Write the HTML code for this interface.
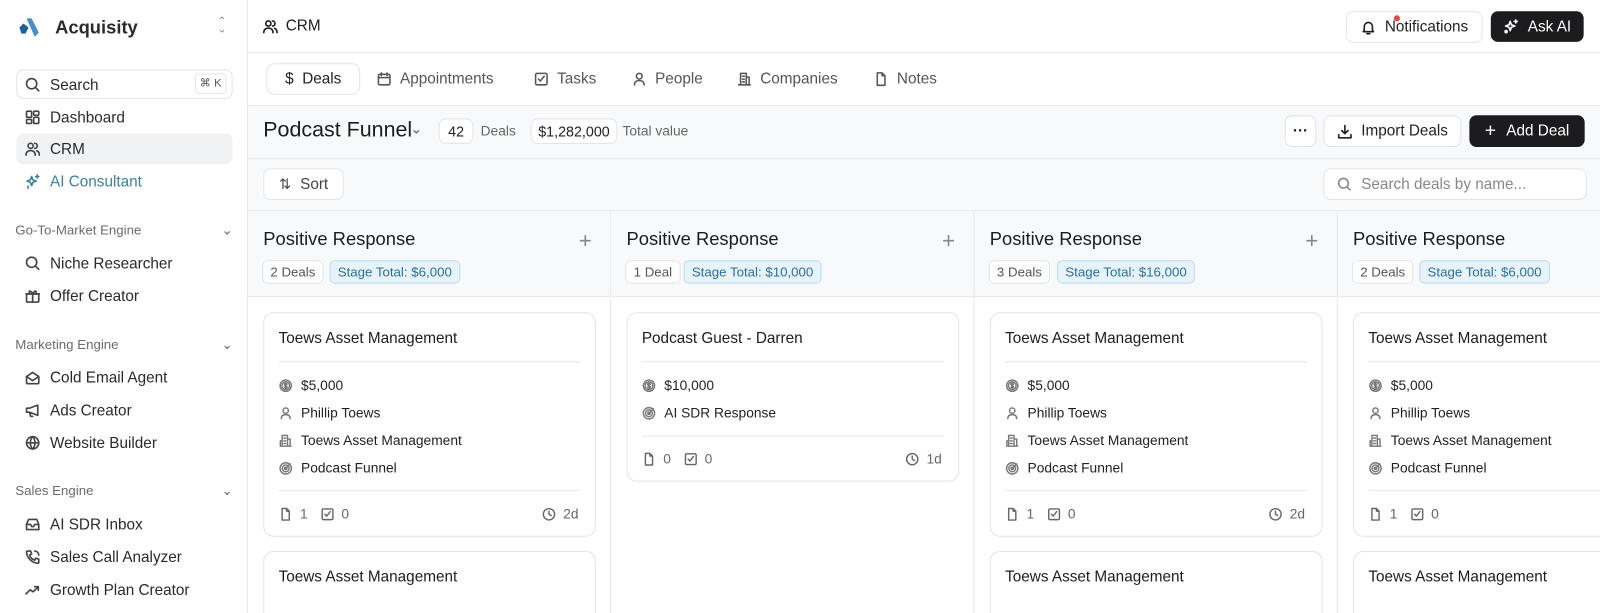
<!DOCTYPE html>
<html><head><meta charset="utf-8"><style>
*{box-sizing:border-box;margin:0;padding:0}
html,body{width:1600px;height:613px;overflow:hidden;background:#fff}
body{font-family:"Liberation Sans",sans-serif;color:#1c1c1e;position:relative}
#w{position:absolute;left:0;top:0;width:1568px;height:601px;transform:scale(1.0204);transform-origin:0 0;overflow:hidden}
.abs{position:absolute}
svg{fill:none;stroke:currentColor;stroke-width:1.6;stroke-linecap:round;stroke-linejoin:round}
.side{left:0;top:0;width:243px;height:601px;border-right:1px solid #e6e7ea;background:#fff}
.ni{position:absolute;left:16px;width:212px;height:30px;display:flex;align-items:center;font-size:15px;color:#2a2a2d;padding-left:8px}
.ni svg{width:16px;height:16px;margin-right:9px;color:#444}
.sec{position:absolute;left:15px;width:213px;font-size:13px;color:#6b6b70;display:flex;justify-content:space-between}
.btn{position:absolute;border:1px solid #e3e4e7;border-radius:7px;background:#fff;display:flex;align-items:center;justify-content:center;font-size:15px;color:#222}
.dark{background:#1c1c1e;color:#fff;border-color:#1c1c1e}
.tab{position:absolute;top:62px;height:30px;display:flex;align-items:center;font-size:15px;color:#555}
.tab svg{width:15px;height:15px;margin-right:8px}
.col{position:absolute;top:207px;width:356px;height:406px;border-right:1px solid #e6e7ea}
.ch{height:84px;background:#f8f9fa;border-bottom:1px solid #e6e7ea;position:relative}
.ct{position:absolute;left:15px;top:17px;font-size:18px;color:#1c1c1e}
.plus{position:absolute;right:18px;top:16px;font-size:22px;color:#888;font-weight:300}
.pill{position:absolute;top:48px;height:23px;border:1px solid #e3e4e7;border-radius:5px;background:#fff;font-size:13px;color:#555;display:flex;align-items:center;padding:0 7px}
.pill.b{background:#e6f3fb;border-color:#b9dcf0;color:#2f6f9c}
.card{position:absolute;left:15px;width:326px;border:1px solid #e3e4e7;border-radius:10px;background:#fff}
.card .t{position:absolute;left:14px;top:16px;font-size:15px;color:#1c1c1e}
.hr{position:absolute;left:14px;right:14px;height:1px;background:#e6e7ea}
.row{position:absolute;left:14px;font-size:13.5px;color:#222;display:flex;align-items:center}
.row svg{width:14px;height:14px;margin-right:8px;color:#777}
.foot{position:absolute;left:14px;right:16px;font-size:13.5px;color:#666;display:flex;align-items:center}
.foot svg{width:14px;height:14px;margin-right:7px;color:#666}
</style></head><body><div id="w">
<div class="abs side">
 <div class="abs" style="left:17px;top:17px"><svg width="22" height="20" viewBox="0 0 22 20" style="stroke:none"><path d="M9 1h5l7 14-4 4z" fill="#4a8ec9"/><path d="M2 10l4-4 5 4-3 6H4z" fill="#1f5f99"/></svg></div>
 <div class="abs" style="left:54px;top:17px;font-size:18px;font-weight:bold;color:#2a2a2d">Acquisity</div>
 <div class="abs" style="left:213px;top:17px;font-size:11px;color:#888;line-height:8px">⌃<br>⌄</div>
 <div class="abs" style="left:16px;top:68px;width:212px;height:29px;border:1px solid #e3e4e7;border-radius:7px"></div>
 <div class="ni" style="top:68px"><svg viewBox="0 0 16 16"><circle cx="7" cy="7" r="5"/><path d="M11 11l3 3"/></svg>Search</div>
 <div class="abs" style="left:191px;top:72px;width:31px;height:20px;border:1px solid #e3e4e7;border-radius:4px;font-size:11px;color:#555;text-align:center;line-height:18px">⌘ K</div>
 <div class="ni" style="top:100px"><svg viewBox="0 0 16 16"><rect x="2" y="2" width="5" height="6" rx="1"/><rect x="9" y="2" width="5" height="4" rx="1"/><rect x="2" y="10" width="5" height="4" rx="1"/><rect x="9" y="8" width="5" height="6" rx="1"/></svg>Dashboard</div>
 <div class="ni" style="top:131px;background:#f1f2f4;border-radius:7px"><svg viewBox="0 0 16 16"><circle cx="6" cy="5" r="2.5"/><path d="M1.5 14c0-3 2-4.5 4.5-4.5s4.5 1.5 4.5 4.5M10 2.5a2.5 2.5 0 010 5M12 9.8c1.6.5 2.5 1.9 2.5 4.2"/></svg>CRM</div>
 <div class="ni" style="top:163px;color:#3f7f9f"><svg viewBox="0 0 16 16" style="color:#3f7f9f"><path d="M7 3l1.2 3.3L11.5 7.5 8.2 8.7 7 12 5.8 8.7 2.5 7.5 5.8 6.3z"/><path d="M12.5 1.5v3M11 3h3M3.5 12.5v2"/></svg>AI Consultant</div>
 <div class="sec" style="top:218px"><span>Go-To-Market Engine</span><span>⌄</span></div>
 <div class="ni" style="top:243px"><svg viewBox="0 0 16 16"><circle cx="7" cy="7" r="5"/><path d="M11 11l3 3"/></svg>Niche Researcher</div>
 <div class="ni" style="top:275px"><svg viewBox="0 0 16 16"><rect x="2" y="6" width="12" height="8" rx="1"/><path d="M1.5 6h13M8 6v8M8 6C6 2 3.5 3 5 5M8 6c2-4 4.5-3 3-1"/></svg>Offer Creator</div>
 <div class="sec" style="top:330px"><span>Marketing Engine</span><span>⌄</span></div>
 <div class="ni" style="top:355px"><svg viewBox="0 0 16 16"><path d="M2 7l6-4 6 4v6a1 1 0 01-1 1H3a1 1 0 01-1-1z"/><path d="M2 7l6 4 6-4"/></svg>Cold Email Agent</div>
 <div class="ni" style="top:387px"><svg viewBox="0 0 16 16"><path d="M2 6h3l8-3v10L5 10H2zM5 10l1 4h2"/></svg>Ads Creator</div>
 <div class="ni" style="top:419px"><svg viewBox="0 0 16 16"><circle cx="8" cy="8" r="6"/><path d="M2 8h12M8 2c-3 3-3 9 0 12M8 2c3 3 3 9 0 12"/></svg>Website Builder</div>
 <div class="sec" style="top:473px"><span>Sales Engine</span><span>⌄</span></div>
 <div class="ni" style="top:499px"><svg viewBox="0 0 16 16"><path d="M2 8l2-5h8l2 5v5H2zM2 8h4l1 2h2l1-2h4"/></svg>AI SDR Inbox</div>
 <div class="ni" style="top:531px"><svg viewBox="0 0 16 16"><path d="M3 2h3l1 3-2 1a8 8 0 005 5l1-2 3 1v3a1 1 0 01-1 1A12 12 0 012 3a1 1 0 011-1zM10 2a4 4 0 014 4"/></svg>Sales Call Analyzer</div>
 <div class="ni" style="top:563px"><svg viewBox="0 0 16 16"><path d="M1.5 12l4-4 3 2 5-5M10 5h3.5v3.5"/></svg>Growth Plan Creator</div>
</div>

<div class="abs" style="left:243px;top:0;width:1357px;height:52px;border-bottom:1px solid #e6e7ea"></div>
<div class="abs" style="left:257px;top:17px;font-size:15px;display:flex;align-items:center"><svg viewBox="0 0 16 16" width="16" height="16" style="margin-right:7px"><circle cx="6" cy="5" r="2.5"/><path d="M1.5 14c0-3 2-4.5 4.5-4.5s4.5 1.5 4.5 4.5M10 2.5a2.5 2.5 0 010 5M12 9.8c1.6.5 2.5 1.9 2.5 4.2"/></svg>CRM</div>
<div class="btn" style="left:1319px;top:11px;width:134px;height:31px"><svg viewBox="0 0 16 16" width="16" height="16" style="margin-right:8px"><path d="M4 11V7a4 4 0 018 0v4l1 1H3zM6.5 14h3"/></svg>Notifications</div>
<div class="abs" style="left:1366px;top:15px;width:6px;height:6px;border-radius:50%;background:#e5484d"></div>
<div class="btn dark" style="left:1461px;top:11px;width:91px;height:30px"><svg viewBox="0 0 16 16" width="16" height="16" style="margin-right:8px"><path d="M7 3l1.2 3.3L11.5 7.5 8.2 8.7 7 12 5.8 8.7 2.5 7.5 5.8 6.3z"/><path d="M12.5 1.5v3M11 3h3"/><circle cx="3" cy="13" r="1"/></svg>Ask AI</div>

<div class="abs" style="left:243px;top:52px;width:1357px;height:52px;border-bottom:1px solid #e6e7ea"></div>
<div class="btn" style="left:261px;top:62px;width:92px;height:31px;border-radius:8px">$&nbsp;&nbsp;Deals</div>
<div class="tab" style="left:369px"><svg viewBox="0 0 16 16"><rect x="2" y="3" width="12" height="11" rx="1.5"/><path d="M2 6.5h12M5 1.5v3M11 1.5v3"/></svg>Appointments</div>
<div class="tab" style="left:523px"><svg viewBox="0 0 16 16"><rect x="2" y="2" width="12" height="12" rx="1.5"/><path d="M5 8l2 2 4-5"/></svg>Tasks</div>
<div class="tab" style="left:619px"><svg viewBox="0 0 16 16"><circle cx="8" cy="5" r="3"/><path d="M3 14c0-3 2-4.5 5-4.5s5 1.5 5 4.5"/></svg>People</div>
<div class="tab" style="left:722px"><svg viewBox="0 0 16 16"><path d="M4 14V2h6v12M10 6h3v8M2 14h12M6 5h2M6 8h2M6 11h2"/></svg>Companies</div>
<div class="tab" style="left:856px"><svg viewBox="0 0 16 16"><path d="M4 1.5h5l3 3v10H4zM9 1.5v3h3"/></svg>Notes</div>

<div class="abs" style="left:243px;top:104px;width:1357px;height:103px;background:#f8f9fa;border-bottom:1px solid #e6e7ea"></div>
<div class="abs" style="left:243px;top:155px;width:1357px;height:1px;background:#e6e7ea"></div>
<div class="abs" style="left:258px;top:116px;font-size:21px;color:#1c1c1e">Podcast Funnel</div>
<div class="abs" style="left:402px;top:118px;font-size:14px;color:#666">⌄</div>
<div class="btn" style="left:430px;top:116px;width:34px;height:25px;font-size:14px">42</div>
<div class="abs" style="left:471px;top:121px;font-size:13.5px;color:#666">Deals</div>
<div class="btn" style="left:520px;top:116px;width:85px;height:25px;font-size:14px">$1,282,000</div>
<div class="abs" style="left:610px;top:121px;font-size:13.5px;color:#666">Total value</div>
<div class="btn" style="left:1259px;top:113px;width:31px;height:31px;font-weight:bold">···</div>
<div class="btn" style="left:1297px;top:113px;width:135px;height:31px"><svg viewBox="0 0 16 16" width="16" height="16" style="margin-right:8px"><path d="M8 2v8M5 7l3 3 3-3M2 11v3h12v-3"/></svg>Import Deals</div>
<div class="btn dark" style="left:1440px;top:113px;width:113px;height:31px"><span style="font-size:19px;margin-right:10px;font-weight:300">+</span>Add Deal</div>
<div class="btn" style="left:258px;top:165px;width:79px;height:31px;color:#444"><span style="margin-right:9px;font-size:14px">⇅</span>Sort</div>
<div class="btn" style="left:1297px;top:165px;width:258px;height:31px;justify-content:flex-start;padding-left:12px;color:#888"><svg viewBox="0 0 16 16" width="15" height="15" style="margin-right:9px"><circle cx="7" cy="7" r="5"/><path d="M11 11l3 3"/></svg>Search deals by name...</div>

<div class="col" style="left:243px">
 <div class="ch"><div class="ct">Positive Response</div><div class="plus">+</div>
 <div class="pill" style="left:14px">2 Deals</div><div class="pill b" style="left:80px">Stage Total: $6,000</div></div>
</div>
<div class="col" style="left:599px">
 <div class="ch"><div class="ct">Positive Response</div><div class="plus">+</div>
 <div class="pill" style="left:14px">1 Deal</div><div class="pill b" style="left:71px">Stage Total: $10,000</div></div>
</div>
<div class="col" style="left:955px">
 <div class="ch"><div class="ct">Positive Response</div><div class="plus">+</div>
 <div class="pill" style="left:14px">3 Deals</div><div class="pill b" style="left:81px">Stage Total: $16,000</div></div>
</div>
<div class="col" style="left:1311px;border-right:none;width:289px">
 <div class="ch"><div class="ct">Positive Response</div>
 <div class="pill" style="left:14px">2 Deals</div><div class="pill b" style="left:80px">Stage Total: $6,000</div></div>
</div>

<svg width="0" height="0" style="position:absolute"><defs>
<symbol id="dol" viewBox="0 0 16 16"><circle cx="8" cy="8" r="6.3"/><circle cx="8" cy="8" r="4.3"/><path d="M9.5 6.3c-.4-.5-1-.7-1.5-.7-.9 0-1.5.5-1.5 1.1 0 1.4 3 .8 3 2.4 0 .6-.6 1.1-1.5 1.1-.6 0-1.2-.3-1.5-.7M8 4.6v6.8"/></symbol>
<symbol id="per" viewBox="0 0 16 16"><circle cx="8" cy="5" r="3"/><path d="M3 14c0-3 2-4.5 5-4.5s5 1.5 5 4.5"/></symbol>
<symbol id="bld" viewBox="0 0 16 16"><path d="M4 14V2h6v12M10 6h3v8M2 14h12M6 5h2M6 8h2M6 11h2M2 14V8h2"/></symbol>
<symbol id="tgt" viewBox="0 0 16 16"><circle cx="8" cy="8" r="6.3"/><circle cx="8" cy="8" r="3.8"/><circle cx="8" cy="8" r="1.3"/><path d="M8 8l5-5"/></symbol>
<symbol id="doc" viewBox="0 0 16 16"><path d="M4 1.5h5l3 3v10H4zM9 1.5v3h3"/></symbol>
<symbol id="chk" viewBox="0 0 16 16"><rect x="2" y="2" width="12" height="12" rx="1.5"/><path d="M5 8l2 2 4-5"/></symbol>
<symbol id="clk" viewBox="0 0 16 16"><circle cx="8" cy="8" r="6.3"/><path d="M8 4.5V8l2.5 1.5"/></symbol>
</defs></svg>

<div class="card" style="left:258px;top:306px;height:220px">
 <div class="t">Toews Asset Management</div><div class="hr" style="top:47px"></div>
 <div class="row" style="top:63px"><svg><use href="#dol"/></svg>$5,000</div>
 <div class="row" style="top:90px"><svg><use href="#per"/></svg>Phillip Toews</div>
 <div class="row" style="top:117px"><svg><use href="#bld"/></svg>Toews Asset Management</div>
 <div class="row" style="top:144px"><svg><use href="#tgt"/></svg>Podcast Funnel</div>
 <div class="hr" style="top:173px"></div>
 <div class="foot" style="top:189px"><svg><use href="#doc"/></svg>1<svg style="margin-left:12px"><use href="#chk"/></svg>0<span style="flex:1"></span><svg><use href="#clk"/></svg>2d</div>
</div>
<div class="card" style="left:258px;top:540px;height:90px"><div class="t">Toews Asset Management</div></div>

<div class="card" style="left:614px;top:306px;height:166px">
 <div class="t">Podcast Guest - Darren</div><div class="hr" style="top:47px"></div>
 <div class="row" style="top:63px"><svg><use href="#dol"/></svg>$10,000</div>
 <div class="row" style="top:90px"><svg><use href="#tgt"/></svg>AI SDR Response</div>
 <div class="hr" style="top:120px"></div>
 <div class="foot" style="top:135px"><svg><use href="#doc"/></svg>0<svg style="margin-left:12px"><use href="#chk"/></svg>0<span style="flex:1"></span><svg><use href="#clk"/></svg>1d</div>
</div>

<div class="card" style="left:970px;top:306px;height:220px">
 <div class="t">Toews Asset Management</div><div class="hr" style="top:47px"></div>
 <div class="row" style="top:63px"><svg><use href="#dol"/></svg>$5,000</div>
 <div class="row" style="top:90px"><svg><use href="#per"/></svg>Phillip Toews</div>
 <div class="row" style="top:117px"><svg><use href="#bld"/></svg>Toews Asset Management</div>
 <div class="row" style="top:144px"><svg><use href="#tgt"/></svg>Podcast Funnel</div>
 <div class="hr" style="top:173px"></div>
 <div class="foot" style="top:189px"><svg><use href="#doc"/></svg>1<svg style="margin-left:12px"><use href="#chk"/></svg>0<span style="flex:1"></span><svg><use href="#clk"/></svg>2d</div>
</div>
<div class="card" style="left:970px;top:540px;height:90px"><div class="t">Toews Asset Management</div></div>

<div class="card" style="left:1326px;top:306px;height:220px;width:300px">
 <div class="t">Toews Asset Management</div><div class="hr" style="top:47px"></div>
 <div class="row" style="top:63px"><svg><use href="#dol"/></svg>$5,000</div>
 <div class="row" style="top:90px"><svg><use href="#per"/></svg>Phillip Toews</div>
 <div class="row" style="top:117px"><svg><use href="#bld"/></svg>Toews Asset Management</div>
 <div class="row" style="top:144px"><svg><use href="#tgt"/></svg>Podcast Funnel</div>
 <div class="hr" style="top:173px"></div>
 <div class="foot" style="top:189px"><svg><use href="#doc"/></svg>1<svg style="margin-left:12px"><use href="#chk"/></svg>0</div>
</div>
<div class="card" style="left:1326px;top:540px;height:90px;width:300px"><div class="t">Toews Asset Management</div></div>
</div></body></html>
